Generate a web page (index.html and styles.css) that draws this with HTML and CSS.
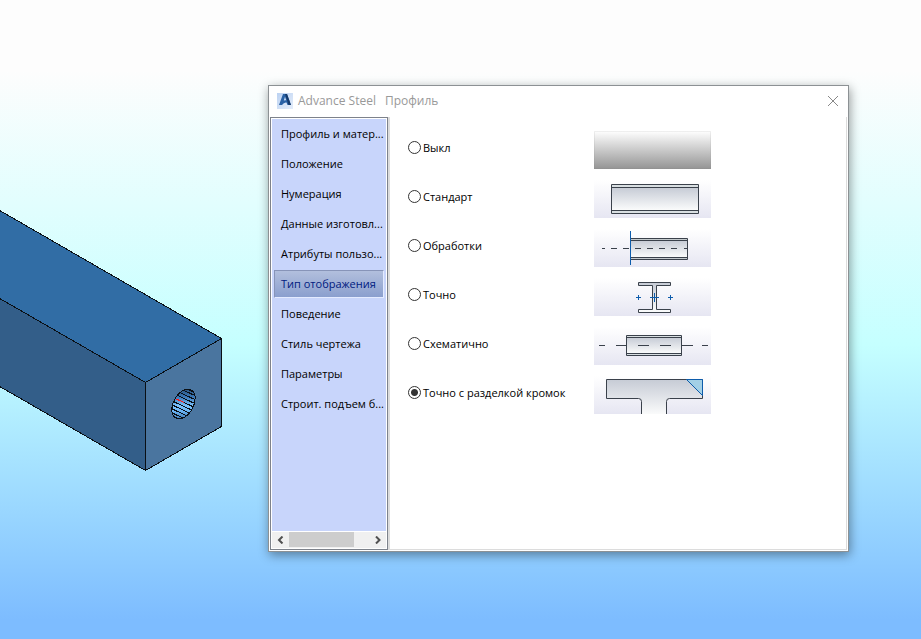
FILE: index.html
```html
<!DOCTYPE html>
<html lang="ru">
<head>
<meta charset="utf-8">
<title>Advance Steel</title>
<link rel="stylesheet" href="styles.css">
</head>
<body>
<main class="viewport">
  <svg class="model" width="223" height="472" viewBox="0 0 223 472" aria-hidden="true" shape-rendering="crispEdges">
    <defs>
      <clipPath id="hole"><ellipse cx="183.500" cy="404" rx="10" ry="16" transform="rotate(29 183.500 404)"/></clipPath>
      <linearGradient id="bore" x1="0" y1="0" x2="0" y2="1">
        <stop offset="0" stop-color="#24476b"/><stop offset=".3" stop-color="#3a76b4"/>
        <stop offset=".55" stop-color="#7cc4ff"/><stop offset=".7" stop-color="#6ab4f4"/><stop offset="1" stop-color="#2e5f94"/>
      </linearGradient>
    </defs>
    <path d="M-2 210L221.500 338.500L145.500 382.500L-2 297.500Z" fill="#316da5"/>
    <path d="M-2 297.500L145.500 382.500V470.500L-2 385.500Z" fill="#335e89"/>
    <path d="M145.500 382.500L221.500 338.500V426.500L145.500 470.500Z" fill="#4a759f"/>
    <path d="M-2 209.500L221.500 338.500V426.500L145.500 470.500L-2 385.500M-2 297.500L145.500 382.500L221.500 338.500M145.500 382.500V470.500" fill="none" stroke="#0a0f14"/>
    <g clip-path="url(#hole)">
      <rect x="168" y="386" width="30" height="36" fill="url(#bore)"/>
      <path d="M168 380l30 14M168 383l30 14M168 387l30 14M168 391l30 14M168 399l30 14M168 403l30 14M168 407l30 14M168 411l30 14M168 414l30 14" stroke="#0a0f14"/>
      <path d="M184 402.500l14 6.500" stroke="#0a0f14"/>
      <path d="M174 398l10 4.500" stroke="#ff1818"/>
    </g>
    <ellipse cx="183.500" cy="404" rx="10" ry="16" transform="rotate(29 183.500 404)" fill="none" stroke="#0a0f14"/>
  </svg>

  <section class="dialog" role="dialog" aria-labelledby="dialog-title">
    <header class="titlebar">
      <svg class="logo" width="16" height="16" viewBox="0 0 16 16" aria-hidden="true">
        <defs>
          <linearGradient id="logo-bg" x1="0" y1="0" x2="1" y2="1"><stop offset="0" stop-color="#bcd2f2"/><stop offset="1" stop-color="#e4edfa"/></linearGradient>
        </defs>
        <rect width="16" height="16" fill="url(#logo-bg)"/>
        <path d="M2 12L6 1H10L14 12H10.500L9.500 9.500Q7 9 5 12Z" fill="#2a62a6"/>
        <path d="M6.800 7.500L8 3.800L9.200 7.200Q8 7 6.800 7.500Z" fill="#c9dbf4"/>
        <path d="M8 1H10L14 12H11.500Z" fill="#163a6b"/>
      </svg>
      <h1 class="title" id="dialog-title"><span>Advance Steel</span><span>Профиль</span></h1>
      <button class="close" type="button" aria-label="Закрыть">
        <svg width="12" height="12" viewBox="0 0 12 12"><path d="M1 1L11 11M11 1L1 11" stroke="#888" fill="none"/></svg>
      </button>
    </header>
    <div class="content">
      <aside class="sidebar">
        <nav class="tabs">
          <button type="button" class="tab">Профиль и матер...</button>
          <button type="button" class="tab">Положение</button>
          <button type="button" class="tab">Нумерация</button>
          <button type="button" class="tab">Данные изготовл...</button>
          <button type="button" class="tab">Атрибуты пользо...</button>
          <button type="button" class="tab tab-active" aria-current="page">Тип отображения</button>
          <button type="button" class="tab">Поведение</button>
          <button type="button" class="tab">Стиль чертежа</button>
          <button type="button" class="tab">Параметры</button>
          <button type="button" class="tab">Строит. подъем б...</button>
        </nav>
        <div class="scrollbar">
          <button type="button" class="arrow" aria-label="Влево"><svg width="8" height="8" viewBox="0 0 8 8"><path d="M5.500 .5L2 4L5.500 7.500" fill="none" stroke="#505050" stroke-width="2"/></svg></button>
          <div class="track"><div class="thumb"></div></div>
          <button type="button" class="arrow" aria-label="Вправо"><svg width="8" height="8" viewBox="0 0 8 8"><path d="M2 .5L5.500 4L2 7.500" fill="none" stroke="#505050" stroke-width="2"/></svg></button>
        </div>
      </aside>
      <form class="panel">
        <svg class="defs" width="0" height="0" aria-hidden="true">
          <defs>
            <linearGradient id="steel" x1="0" y1="0" x2="0" y2="1"><stop offset="0" stop-color="#c6cbd5"/><stop offset="1" stop-color="#fbfcfc"/></linearGradient>
          </defs>
        </svg>
        <div class="option">
          <label class="choice"><input type="radio" name="view">Выкл</label>
          <div class="preview preview-off"></div>
        </div>
        <div class="option">
          <label class="choice"><input type="radio" name="view">Стандарт</label>
          <svg class="preview" width="117" height="38" viewBox="0 0 117 38" aria-hidden="true">
            <rect x="17.500" y="4.500" width="87" height="29" fill="#d9dfe2"/>
            <rect x="17.500" y="7.500" width="87" height="23" fill="url(#steel)"/>
            <path d="M17.500 4.500H104.500V33.500H17.500ZM17.500 7.500H104.500M17.500 30.500H104.500" fill="none" stroke="#3a414b"/>
          </svg>
        </div>
        <div class="option">
          <label class="choice"><input type="radio" name="view">Обработки</label>
          <svg class="preview" width="117" height="38" viewBox="0 0 117 38" aria-hidden="true">
            <rect x="36.500" y="9.500" width="57" height="21" fill="#c4cacd"/>
            <rect x="36.500" y="11.500" width="57" height="17" fill="url(#steel)"/>
            <path d="M36.500 9.500H93.500V30.500H36.500M36.500 11.500H93.500M36.500 28.500H93.500M8 19.500H11M17 19.500H23M29 19.500H35M41 19.500H47M53 19.500H59M65 19.500H71M77 19.500H83M90 19.500H94" fill="none" stroke="#3a414b"/>
            <path d="M36.500 2V36" stroke="#0d5cab"/>
          </svg>
        </div>
        <div class="option">
          <label class="choice"><input type="radio" name="view">Точно</label>
          <svg class="preview" width="117" height="38" viewBox="0 0 117 38" aria-hidden="true">
            <path d="M44.500 4.500H76.500V7.500H62.500V31.500H76.500V34.500H44.500V31.500H58.500V7.500H44.500Z" fill="url(#steel)" stroke="#3a414b"/>
            <path d="M42 19.500H47M44.500 17V22M74 19.500H79M76.500 17V22M56 19.500H65M60.500 15V24" stroke="#0d5cab"/>
          </svg>
        </div>
        <div class="option">
          <label class="choice"><input type="radio" name="view">Схематично</label>
          <svg class="preview" width="117" height="38" viewBox="0 0 117 38" aria-hidden="true">
            <rect x="32.500" y="8.500" width="55" height="20" fill="#d9dfe2"/>
            <rect x="32.500" y="10.500" width="55" height="16" fill="url(#steel)"/>
            <path d="M32.500 8.500H87.500V28.500H32.500ZM32.500 10.500H87.500M32.500 26.500H87.500M5 18.500H11M22 18.500H33M44 18.500H55M66 18.500H77M88 18.500H99M108 18.500H114" fill="none" stroke="#3a414b"/>
          </svg>
        </div>
        <div class="option">
          <label class="choice"><input type="radio" name="view" checked>Точно с разделкой кромок</label>
          <svg class="preview" width="117" height="38" viewBox="0 0 117 38" aria-hidden="true">
            <path d="M47.500 39V25.500Q47.500 22.500 44.500 22.500H12.500V3.500H108.500V22.500H75.500Q72.500 22.500 72.500 25.500V39" fill="url(#steel)" stroke="#3a414b"/>
            <path d="M92.500 3.500H108.500V19.500Z" fill="#a3d0e6" stroke="#0d5cab"/>
          </svg>
        </div>
      </form>
    </div>
  </section>
</main>
</body>
</html>
```
FILE: styles.css
```css
* {
  box-sizing: border-box;
}

body {
  margin: 0;
  font: 11px/16px "Open Sans", "Noto Sans", sans-serif;
  color: #000;
}

button {
  margin: 0;
  padding: 0;
  border: 0;
  background: none;
  font: inherit;
  color: inherit;
}

svg {
  display: block;
}

.viewport {
  position: relative;
  min-height: 100vh;
  overflow: hidden;
  background: linear-gradient(#fdfdfd 0%, #fdfdfd 11%, #c5ffff 54%, #7dbcff 97%);
}

.model {
  position: absolute;
  left: 0;
  top: 0;
}

/* Floating window over the model canvas */
.dialog {
  position: absolute;
  inset: 85px 72px 87px 268px;
  display: flex;
  flex-direction: column;
  border: 1px solid #8c9194;
  background: #fff;
  box-shadow: 1px 3px 10px rgba(0, 0, 0, 0.4);
}

.titlebar {
  display: flex;
  align-items: center;
  height: 31px;
  padding: 0 9px 2px 8px;
  color: #999;
}

.title {
  display: flex;
  flex: 1;
  gap: 9px;
  margin: 0 0 0 5px;
  font-size: 12px;
  line-height: 16px;
  font-weight: 400;
}

.close {
  display: grid;
  place-items: center;
}

.content {
  display: flex;
  flex: 1;
  min-height: 0;
  padding: 0 1px 1px;
}

.sidebar {
  display: flex;
  flex-direction: column;
  width: 118px;
  border: 1px solid #7d828b;
  padding: 1px;
}

.tabs {
  display: flex;
  flex: 1;
  flex-direction: column;
  gap: 2px;
  padding: 1px 2px;
  background: #c8d5fb;
}

.tab {
  height: 28px;
  padding-left: 6px;
  border: 1px solid transparent;
  text-align: left;
  white-space: nowrap;
}

.tab-active {
  border-color: #8794b8 #e4ebff #e4ebff #8794b8;
  background: linear-gradient(#b2bfdd, #8b9fce);
  color: #001a80;
}

.scrollbar {
  display: flex;
  height: 16px;
  margin-top: 1px;
  background: #f0f0f0;
}

.arrow {
  display: grid;
  place-items: center;
  width: 17px;
}

.track {
  flex: 1;
}

.thumb {
  width: 81%;
  height: 15px;
  background: #cdcdcd;
}

.panel {
  display: flex;
  flex: 1;
  flex-direction: column;
  gap: 11px;
  padding: 14px 0 0 18px;
  border: solid #dcdcdc;
  border-width: 0 1px 1px 2px;
}

.defs {
  position: absolute;
}

.option {
  display: flex;
  height: 38px;
}

.choice {
  display: flex;
  align-items: center;
  gap: 2px;
  width: 186px;
  height: 33px;
  white-space: nowrap;
}

.choice input {
  appearance: none;
  flex: none;
  width: 13px;
  height: 13px;
  margin: 0;
  border: 1px solid #333;
  border-radius: 50%;
  background: #fff;
}

.choice input:checked {
  background: radial-gradient(circle, #333 3px, #fff 4px);
}

.preview {
  width: 117px;
  height: 38px;
  background: linear-gradient(#fff, #e6e6f2);
}

.preview-off {
  border: 1px solid rgba(128, 128, 128, 0.12);
  background: linear-gradient(#fff, #949494) border-box;
}
```
